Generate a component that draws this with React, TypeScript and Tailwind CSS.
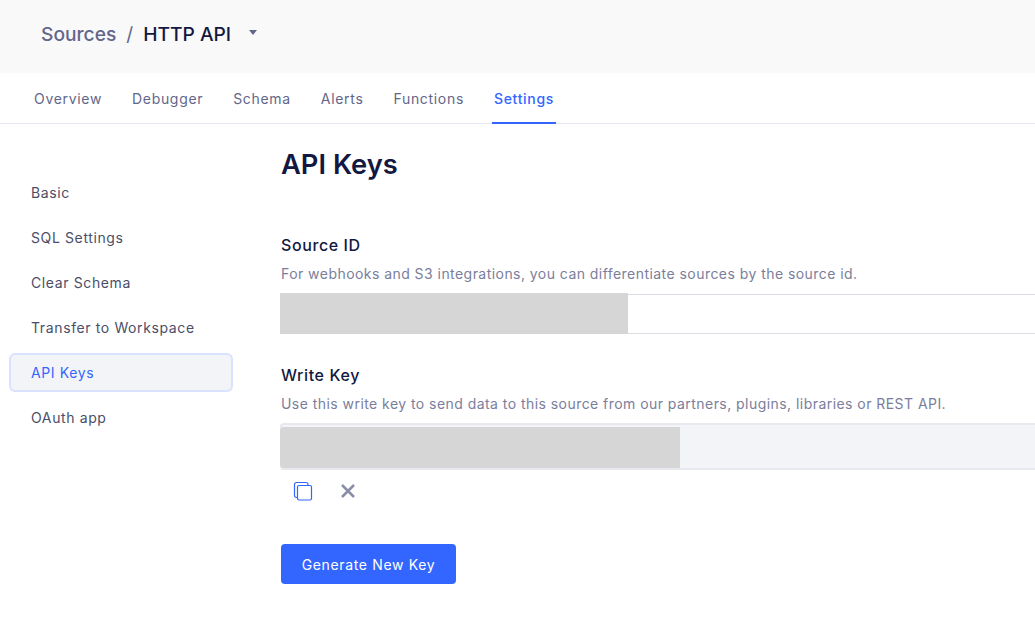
const tabs = ["Overview", "Debugger", "Schema", "Alerts", "Functions", "Settings"];
const sideItems = ["Basic", "SQL Settings", "Clear Schema", "Transfer to Workspace", "API Keys", "OAuth app"];

const App = () => {
  return (
    <div className="w-[1035px] h-[628px] overflow-hidden bg-white font-['Inter',sans-serif]">
      <div className="h-[73px] bg-[#f9f9fa] flex items-center pl-[41px] pb-[5px] text-[19.2px] font-medium">
        <span className="text-[#62668a]">Sources</span>
        <span className="text-[#62668a] ml-[10px] font-normal">/</span>
        <span className="text-[#12183f] ml-[10px]">HTTP API</span>
        <span className="ml-[18px] mb-[3px] w-0 h-0 border-x-[4px] border-x-transparent border-t-[5px] border-t-[#62668a]" />
      </div>

      <div className="h-[51px] flex pl-[32px] gap-[26px] border-b border-[#e6e7ee]">
        {tabs.map((tab) => (
          <div
            key={tab}
            className={
              tab === "Settings"
                ? "px-[2px] h-[51px] pt-[17px] text-[14px] leading-[18px] font-medium tracking-[0.68px] text-[#3366ff] border-b-2 border-[#3366ff]"
                : "px-[2px] h-[50px] pt-[17px] text-[14px] leading-[18px] tracking-[0.68px] text-[#62668a]"
            }
          >
            {tab}
          </div>
        ))}
      </div>

      <div className="flex">
        <div className="w-[281px] shrink-0 pl-[9px] pt-[49px]">
          <div className="w-[224px] flex flex-col gap-[6px]">
            {sideItems.map((item) => (
              <div
                key={item}
                className={
                  item === "API Keys"
                    ? "h-[39px] pl-[20px] flex items-center rounded-md border-2 border-[#d9e2ff] bg-[#f3f4f8] text-[14px] tracking-[0.62px] text-[#3366ff]"
                    : "h-[39px] pl-[22px] flex items-center text-[14px] tracking-[0.62px] text-[#4a4e69]"
                }
              >
                {item}
              </div>
            ))}
          </div>
        </div>

        <div className="flex-1 min-w-0">
          <h1 className="mt-[23px] text-[27.3px] leading-[36px] font-semibold text-[#12183f]">API Keys</h1>

          <div className="mt-[50px] text-[16px] leading-[24px] font-medium tracking-[0.6px] text-[#12183f]">Source ID</div>
          <p className="mt-[7px] text-[14px] leading-[20px] tracking-[0.45px] text-[#7a7e9c]">
            For webhooks and S3 integrations, you can differentiate sources by the source id.
          </p>
          <div className="relative mt-[10px] h-[40px] border-y border-[#dcdde5]">
            <div className="absolute -left-[1px] -top-[2px] w-[348px] h-[41px] bg-[#d6d6d6]" />
          </div>

          <div className="mt-[29px] text-[16px] leading-[24px] font-medium tracking-[0.6px] text-[#12183f]">Write Key</div>
          <p className="mt-[7px] text-[14px] leading-[20px] tracking-[0.45px] text-[#7a7e9c]">
            Use this write key to send data to this source from our partners, plugins, libraries or REST API.
          </p>
          <div className="relative mt-[9px] h-[47px] -ml-[1px] border-2 border-r-0 border-[#e8e9ef] rounded-l bg-[#f3f4f8]">
            <div className="absolute -left-[2px] top-[2px] w-[400px] h-[41px] bg-[#d6d6d6] rounded-l-sm" />
          </div>

          <div className="flex items-center mt-[11px] pl-[12px] gap-[25px] h-[20px]">
            <svg width="20" height="20" viewBox="0 0 20 20" fill="none" stroke="#3366ff" strokeWidth="1.2">
              <path d="M4.5 16.5h-1a2 2 0 0 1-2-2V3.5a2 2 0 0 1 2-2h9.5a2 2 0 0 1 2 2v1" />
              <rect x="4.5" y="4.5" width="14" height="14.5" rx="1.5" />
            </svg>
            <svg width="20" height="20" viewBox="0 0 20 20" fill="none" stroke="#8a8eaa" strokeWidth="2.6">
              <path d="M4 4l12 12M16 4L4 16" />
            </svg>
          </div>

          <button className="mt-[43px] w-[175px] h-[40px] rounded bg-[#3366ff] text-white text-[14px] tracking-[0.65px]">
            Generate New Key
          </button>
        </div>
      </div>
    </div>
  );
};

export default App;
